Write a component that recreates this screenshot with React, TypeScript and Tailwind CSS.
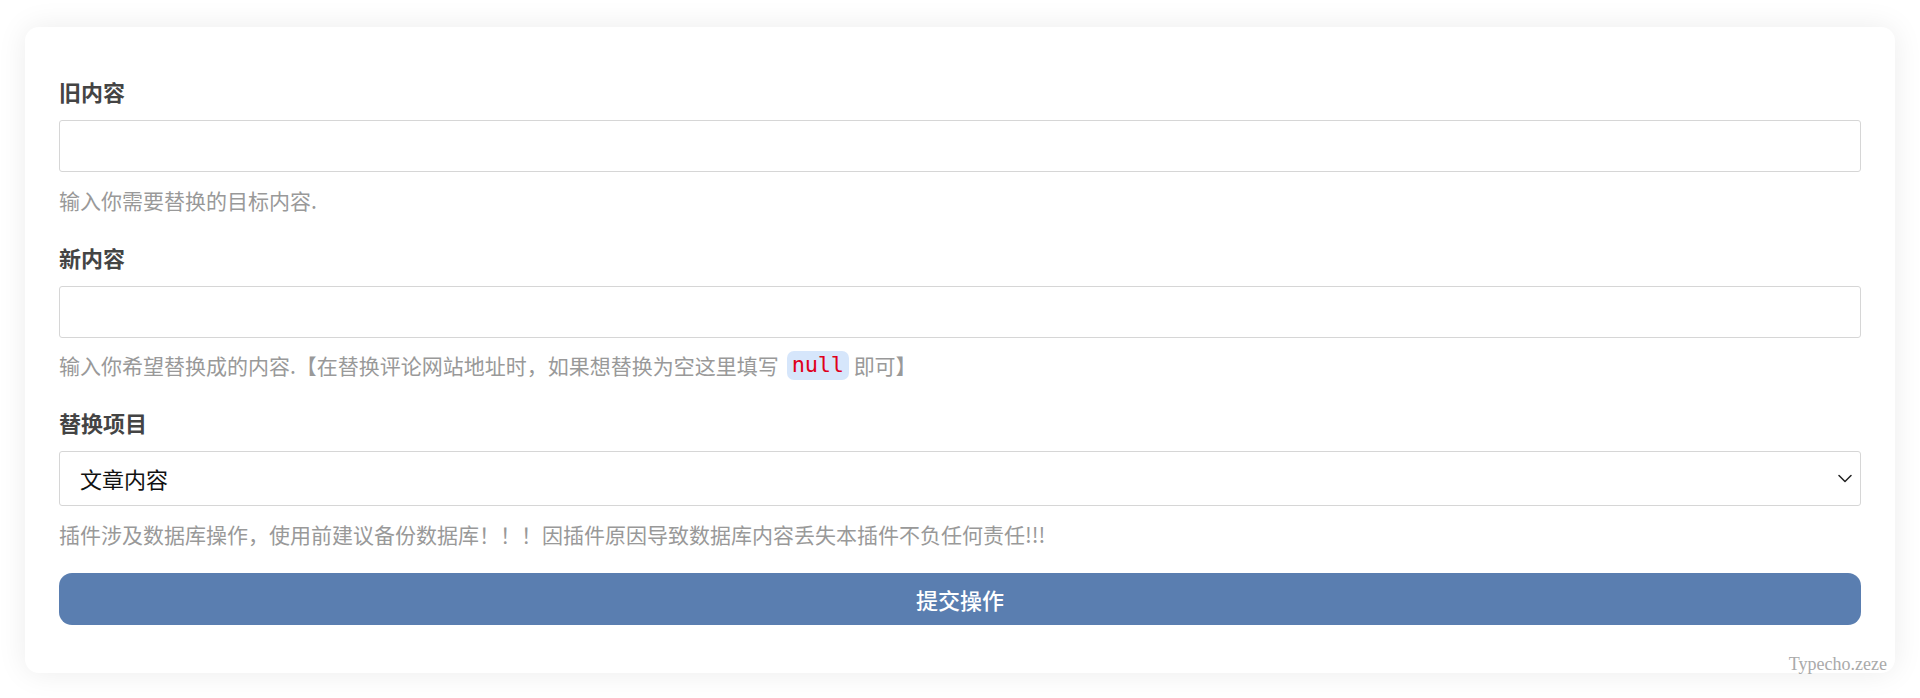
import React from "react";

export default function App() {
  return (
    <div className="relative w-full h-[698px] bg-white px-[25px] pt-[27px] pb-[26px] font-['Noto_Sans_CJK_SC',_'Noto_Sans',_sans-serif]">
      <div className="bg-white rounded-[14px] shadow-[0_0_30px_rgba(0,0,0,0.08)] px-[34px] pt-[48px] pb-[48px] flex flex-col">
        <label className="text-[22px] leading-[32px] font-bold text-[#444]">旧内容</label>
        <input
          type="text"
          className="mt-[13px] h-[52px] w-full border border-[#d6d6d6] rounded-[3px] bg-white outline-none px-[20px] text-[22px]"
        />
        <p className="mt-[13px] text-[21px] leading-[30px] text-[#999]">输入你需要替换的目标内容.</p>

        <label className="mt-[26px] text-[22px] leading-[32px] font-bold text-[#444]">新内容</label>
        <input
          type="text"
          className="mt-[13px] h-[52px] w-full border border-[#d6d6d6] rounded-[3px] bg-white outline-none px-[20px] text-[22px]"
        />
        <p className="mt-[12px] text-[21px] leading-[30px] text-[#999] flex items-center">
          <span>输入你希望替换成的内容.【在替换评论网站地址时，如果想替换为空这里填写</span>
          <code className="ml-[8px] mr-[5px] inline-flex items-center h-[29px] px-[5px] rounded-[7px] bg-[#d6e6fb] text-[#e0001b] text-[22px] font-['DejaVu_Sans_Mono',_monospace] tracking-[-0.3px]">
            null
          </code>
          <span>即可】</span>
        </p>

        <label className="mt-[26px] text-[22px] leading-[32px] font-bold text-[#444]">替换项目</label>
        <div className="mt-[13px] h-[55px] w-full border border-[#d6d6d6] rounded-[3px] bg-white flex items-center justify-between pl-[20px] pr-[8px]">
          <span className="text-[22px] text-[#111]">文章内容</span>
          <svg width="14" height="9" viewBox="0 0 14 9" fill="none">
            <path d="M1 1.5L7 7.5L13 1.5" stroke="#222" strokeWidth="1.5" strokeLinecap="round" strokeLinejoin="round" />
          </svg>
        </div>
        <p className="mt-[13px] text-[21px] leading-[30px] text-[#999]">
          插件涉及数据库操作，使用前建议备份数据库！！！因插件原因导致数据库内容丢失本插件不负任何责任!!!
        </p>

        <button className="mt-[24px] h-[52px] w-full rounded-[13px] bg-[#5a7eb0] text-white text-[22px] font-medium">
          提交操作
        </button>
      </div>
      <div className="absolute right-[33px] bottom-[24px] text-[18px] leading-[20px] text-[#aaa] font-['Liberation_Serif',_serif]">
        Typecho.zeze
      </div>
    </div>
  );
}
